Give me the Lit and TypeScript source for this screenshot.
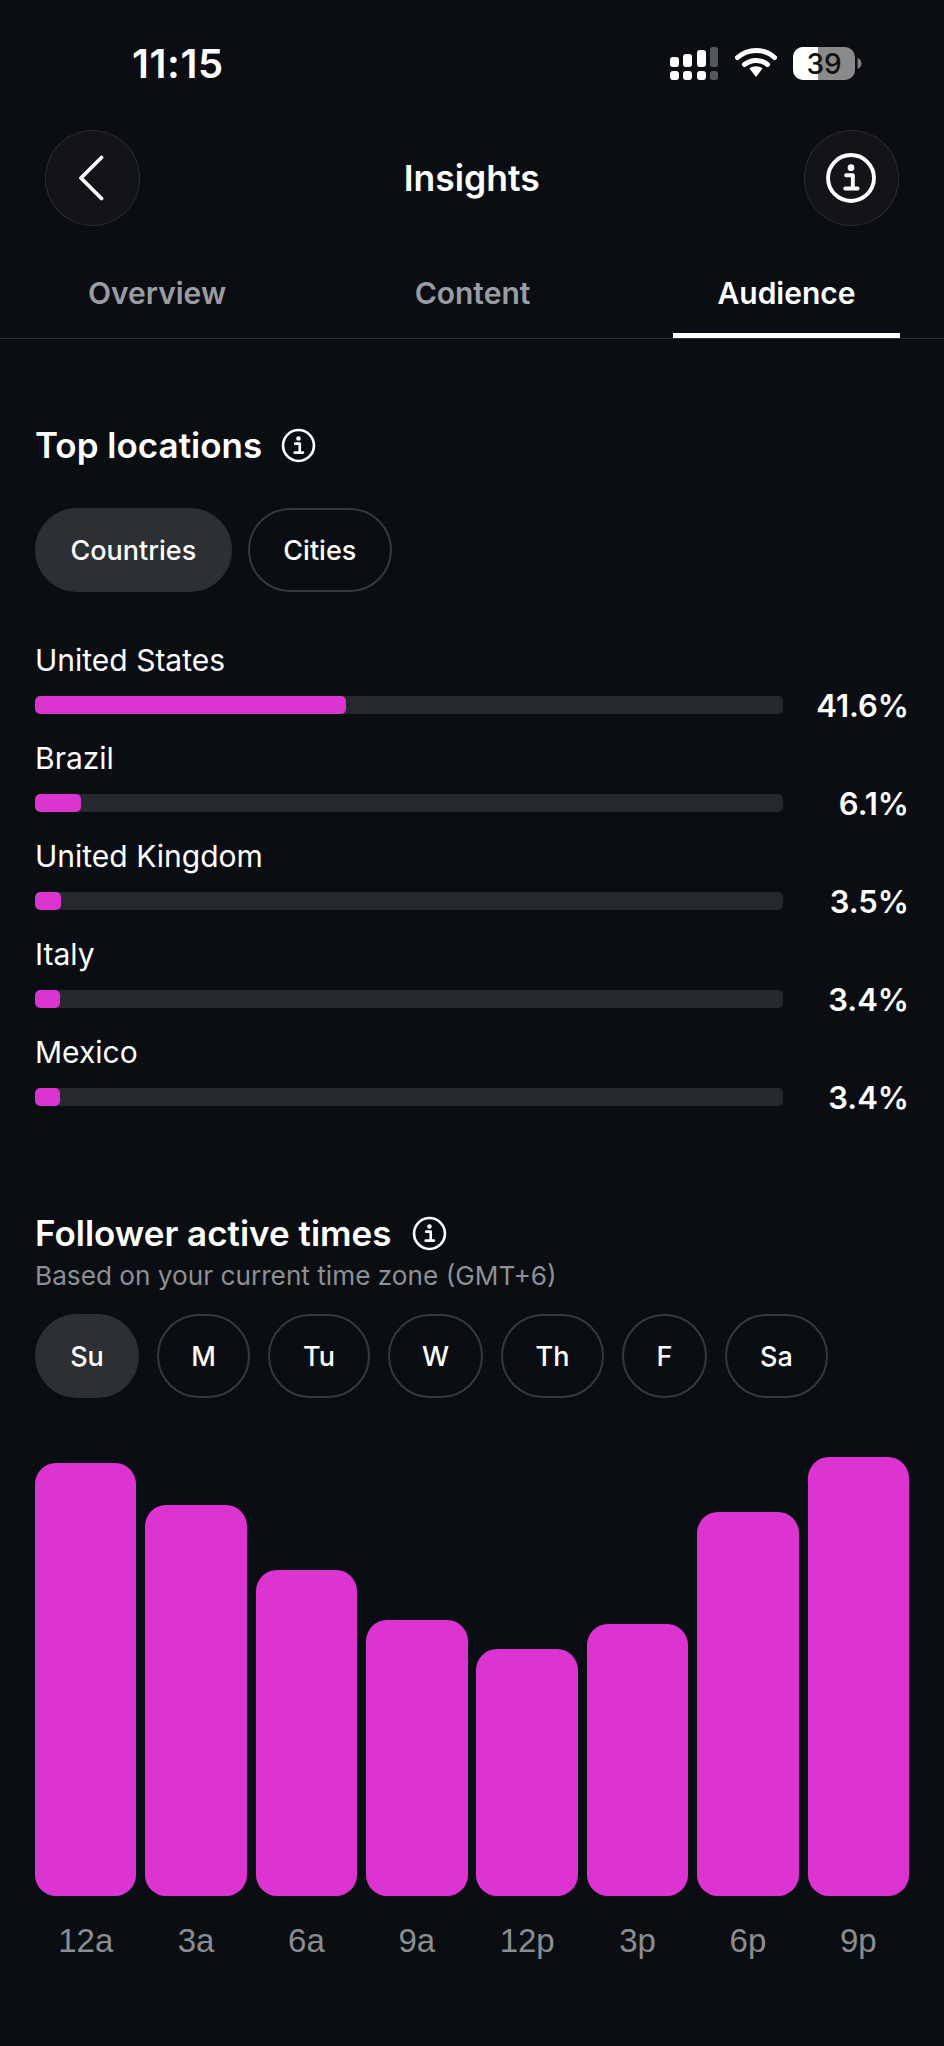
import { LitElement, html, css, svg } from "lit";
import { customElement } from "lit/decorators.js";

const info = (size: number, sw: number) => html`<svg class="info" width=${size} height=${size} viewBox="0 0 48 48" fill="none">
  <circle cx="24" cy="24" r=${22 - sw / 2 + 1} stroke="#fff" stroke-width=${sw}/>
  <circle cx="24" cy="14.5" r="3.1" fill="#fff"/>
  <path d="M19.5 21.5h6.2v12.2h3.6M18.7 33.7h11.4" stroke="#fff" stroke-width="3.6" stroke-linecap="round" stroke-linejoin="round"/>
</svg>`;

const locations = [
  { name: "United States", pct: "41.6%", fill: 311 },
  { name: "Brazil", pct: "6.1%", fill: 46 },
  { name: "United Kingdom", pct: "3.5%", fill: 26 },
  { name: "Italy", pct: "3.4%", fill: 25 },
  { name: "Mexico", pct: "3.4%", fill: 25 },
];
const days = [
  { t: "Su", w: 104 }, { t: "M", w: 93 }, { t: "Tu", w: 102 }, { t: "W", w: 95 },
  { t: "Th", w: 103 }, { t: "F", w: 85 }, { t: "Sa", w: 103 },
];
const bars = [
  { t: "12a", h: 433 }, { t: "3a", h: 391 }, { t: "6a", h: 326 }, { t: "9a", h: 276 },
  { t: "12p", h: 247 }, { t: "3p", h: 272 }, { t: "6p", h: 384 }, { t: "9p", h: 439 },
];

@customElement("app-root")
export class AppRoot extends LitElement {
  static styles = css`
    :host { display: block; width: 944px; height: 2046px; background: #0a0e13; color: #fff; font-family: Inter, "Liberation Sans", sans-serif; overflow: hidden; }
    .status { height: 129px; display: flex; justify-content: space-between; padding: 0 81px 0 132px; box-sizing: border-box; }
    .time { font-size: 40px; font-weight: 600; line-height: 46px; margin-top: 41px; letter-spacing: 0.6px; }
    .sicons { display: flex; gap: 16px; align-items: flex-start; padding-top: 47px; }
    .nav { height: 98px; padding: 0 45px 0 44.5px; display: flex; justify-content: space-between; align-items: center; }
    .round { width: 95.5px; height: 96px; border-radius: 50%; background: #121417; border: 1.5px solid #2a2d30; box-sizing: border-box; display: flex; align-items: center; justify-content: center; }
    .chev { margin-right: 2px; }
    .title { font-size: 35.5px; font-weight: 600; }
    .tabs { height: 112px; display: grid; grid-template-columns: repeat(3, 227px); column-gap: 87px; padding-left: 45px; border-bottom: 1px solid #2b2e32; box-sizing: border-box; }
    .tab { display: flex; justify-content: center; padding-top: 46px; font-size: 30px; line-height: 40px; font-weight: 600; color: #9a9ca3; box-sizing: border-box; height: 111px; }
    .tab:first-child { padding-right: 3px; }
    .tab.on { color: #fff; border-bottom: 5px solid #fff; }
    .body { padding: 86px 35px 0; }
    .h { display: flex; align-items: center; gap: 20px; font-size: 35px; font-weight: 600; line-height: 40px; }
    .h.top { gap: 19px; }
    .pills { display: flex; gap: 16px; margin-top: 43px; }
    .pill { height: 84px; border-radius: 42px; border: 2px solid #36393d; box-sizing: border-box; display: flex; align-items: center; justify-content: center; font-size: 27px; font-weight: 500; }
    .pill.on { background: #2c2f33; border-color: #2c2f33; }
    .pill.loc { padding: 0 33.5px; }
    .rows { margin-top: 50px; display: flex; flex-direction: column; gap: 17px; }
    .name { font-size: 30px; line-height: 36px; font-weight: 400; }
    .barline { display: flex; align-items: center; margin-top: 9px; height: 36px; }
    .track { width: 748px; height: 18px; border-radius: 5px; background: #25282c; overflow: hidden; }
    .fill { height: 100%; border-radius: 5px; background: #db34d1; }
    .pct { flex: 1; text-align: right; font-size: 31px; font-weight: 600; }
    .follow { margin-top: 98px; gap: 21px; }
    .sub { font-size: 26.2px; line-height: 32px; margin-top: 7px; color: #8d9095; }
    .days { margin-top: 22px; gap: 18px; }
    .chart { margin-top: 59px; height: 439px; display: flex; align-items: flex-end; gap: 8.9px; }
    .bar { width: 101.5px; background: #db34d1; border-radius: 21px; }
    .labels { margin-top: 25px; display: flex; gap: 8.9px; }
    .labels span { width: 101.5px; text-align: center; font-size: 33px; line-height: 40px; color: #8a8d91; font-family: "Liberation Sans", Arial, sans-serif; }
  `;

  render() {
    return html`
      <div class="status">
        <div class="time">11:15</div>
        <div class="sicons">
          <svg width="49" height="33" viewBox="0 0 49 33">
            ${[[0, 10, 10], [13, 7, 13], [27, 3, 17]].map(([x, y, h]) => svg`<rect x=${x} y=${y} width="9" height=${h} rx="3" fill="#fff"/><rect x=${x} y="24" width="9" height="9" rx="3" fill="#fff"/>`)}
            <rect x="40" y="0" width="8" height="20" rx="2.5" fill="#55575a"/><rect x="40" y="24" width="8" height="9" rx="2.5" fill="#55575a"/>
          </svg>
          <svg width="42" height="31" viewBox="0 0 42 31" fill="none">
            <path d="M2.5 10.5C13 1 29 1 39.5 10.5" stroke="#fff" stroke-width="5" stroke-linecap="round"/>
            <path d="M9.5 17.5c6.500-5.500 16.500-5.500 23 0" stroke="#fff" stroke-width="5" stroke-linecap="round"/>
            <path d="M14.500 21.500c3.500-3 9.500-3 13 0L21 30z" fill="#fff"/>
          </svg>
          <svg width="70" height="33" viewBox="0 0 70 33">
            <rect x="0" y="0" width="62" height="33" rx="10" fill="#8a8a8a"/>
            <path d="M10 0h15v33H10a10 10 0 0 1-10-10V10A10 10 0 0 1 10 0z" fill="#fff"/>
            <path d="M64.500 11c2.500.5 4 3 4 5.500s-1.500 5-4 5.500z" fill="#7c7c7c"/>
            <text x="31" y="26.500" text-anchor="middle" font-family="Inter, sans-serif" font-size="28" font-weight="500" fill="#111">39</text>
          </svg>
        </div>
      </div>
      <div class="nav">
        <div class="round">
          <svg class="chev" width="26" height="46" viewBox="0 0 26 46" fill="none"><path d="M23.500 2.500 3 23l20.500 20.500" stroke="#fff" stroke-width="3.800" stroke-linecap="round" stroke-linejoin="round"/></svg>
        </div>
        <div class="title">Insights</div>
        <div class="round">${info(52, 3.6)}</div>
      </div>
      <div class="tabs">
        <div class="tab">Overview</div>
        <div class="tab">Content</div>
        <div class="tab on">Audience</div>
      </div>
      <div class="body">
        <div class="h top">Top locations ${info(35, 3.6)}</div>
        <div class="pills">
          <div class="pill loc on">Countries</div>
          <div class="pill loc">Cities</div>
        </div>
        <div class="rows">
          ${locations.map((l) => html`<div>
            <div class="name">${l.name}</div>
            <div class="barline"><div class="track"><div class="fill" style="width:${l.fill}px"></div></div><div class="pct">${l.pct}</div></div>
          </div>`)}
        </div>
        <div class="h follow">Follower active times ${info(35, 3.6)}</div>
        <div class="sub">Based on your current time zone (GMT+6)</div>
        <div class="pills days">
          ${days.map((d, i) => html`<div class="pill ${i === 0 ? "on" : ""}" style="width:${d.w}px">${d.t}</div>`)}
        </div>
        <div class="chart">
          ${bars.map((b) => html`<div class="bar" style="height:${b.h}px"></div>`)}
        </div>
        <div class="labels">
          ${bars.map((b) => html`<span>${b.t}</span>`)}
        </div>
      </div>
    `;
  }
}
